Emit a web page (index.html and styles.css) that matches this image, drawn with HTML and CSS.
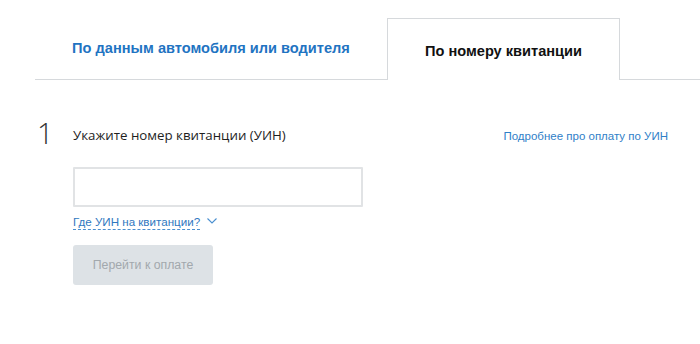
FILE: index.html
```html
<!DOCTYPE html>
<html lang="ru">
<head>
<meta charset="utf-8">
<link rel="stylesheet" href="styles.css">
</head>
<body>
<div class="page">
  <div class="tabs">
    <div class="tab tab-link">По данным автомобиля или водителя</div>
    <div class="tab tab-active">По номеру квитанции</div>
    <div class="tab-rest"></div>
  </div>
  <div class="step">
    <div class="step-num">1</div>
    <div class="step-body">
      <div class="step-head">
        <span class="step-title">Укажите номер квитанции (УИН)</span>
        <a class="more" href="#">Подробнее про оплату по УИН</a>
      </div>
      <input class="uin" type="text">
      <div class="hint"><span class="hint-text">Где УИН на квитанции?</span><svg class="chev" width="10" height="6" viewBox="0 0 10 6"><path d="M0.5 0.5 L5 5 L9.5 0.5" fill="none" stroke="#4a8fd0" stroke-width="1.1"/></svg></div>
      <button class="pay" disabled>Перейти к оплате</button>
    </div>
  </div>
</div>
</body>
</html>
```

FILE: styles.css
```css
html, body {
  margin: 0;
  padding: 0;
  background: #fff;
}
.page {
  width: 700px;
  padding-top: 18px;
  font-family: "Liberation Sans", Arial, sans-serif;
}
.tabs {
  display: flex;
  align-items: stretch;
  height: 62px;
  margin-left: 35px;
}
.tab {
  display: flex;
  align-items: center;
  justify-content: center;
  font-size: 14.6px;
  font-weight: bold;
  border-bottom: 1px solid #d6d9dc;
}
.tab-link {
  width: 352px;
  color: #1f74c2;
  padding-bottom: 2px;
  box-sizing: border-box;
}
.tab-active {
  width: 233px;
  box-sizing: border-box;
  color: #111;
  border: 1px solid #d6d9dc;
  border-bottom: none;
  padding-top: 2px;
}
.tab-rest {
  flex: 1;
  border-bottom: 1px solid #d6d9dc;
}
.step {
  display: flex;
  margin-top: 38px;
}
.step-num {
  width: 73px;
  box-sizing: border-box;
  padding-left: 37px;
  font-family: "Open Sans", sans-serif;
  font-weight: 300;
  font-size: 29px;
  line-height: 30px;
  color: #333;
}
.step-body {
  flex: 1;
  padding-right: 32px;
}
.step-head {
  display: flex;
  justify-content: space-between;
  align-items: baseline;
  padding-top: 8px;
}
.step-title {
  font-family: "Open Sans", sans-serif;
  font-size: 13.3px;
  color: #1e1e1e;
}
.more {
  font-size: 11.5px;
  color: #2f80c8;
  text-decoration: none;
}
.uin {
  display: block;
  margin-top: 23px;
  width: 290px;
  height: 40px;
  box-sizing: border-box;
  border: 2px solid #e1e3e5;
  border-radius: 1px;
  outline: none;
}
.hint {
  display: flex;
  align-items: center;
  gap: 7px;
  margin-top: 7px;
  font-size: 11.6px;
  color: #2f78c0;
}
.hint-text {
  border-bottom: 1px dashed #4a8fd0;
  line-height: 15px;
}
.chev {
  margin-top: -3px;
}
.pay {
  display: block;
  margin-top: 15px;
  width: 140px;
  height: 40px;
  border: none;
  border-radius: 3px;
  background: #dde2e6;
  color: #a2a8ad;
  font-family: "Liberation Sans", Arial, sans-serif;
  font-size: 12.3px;
}
```
